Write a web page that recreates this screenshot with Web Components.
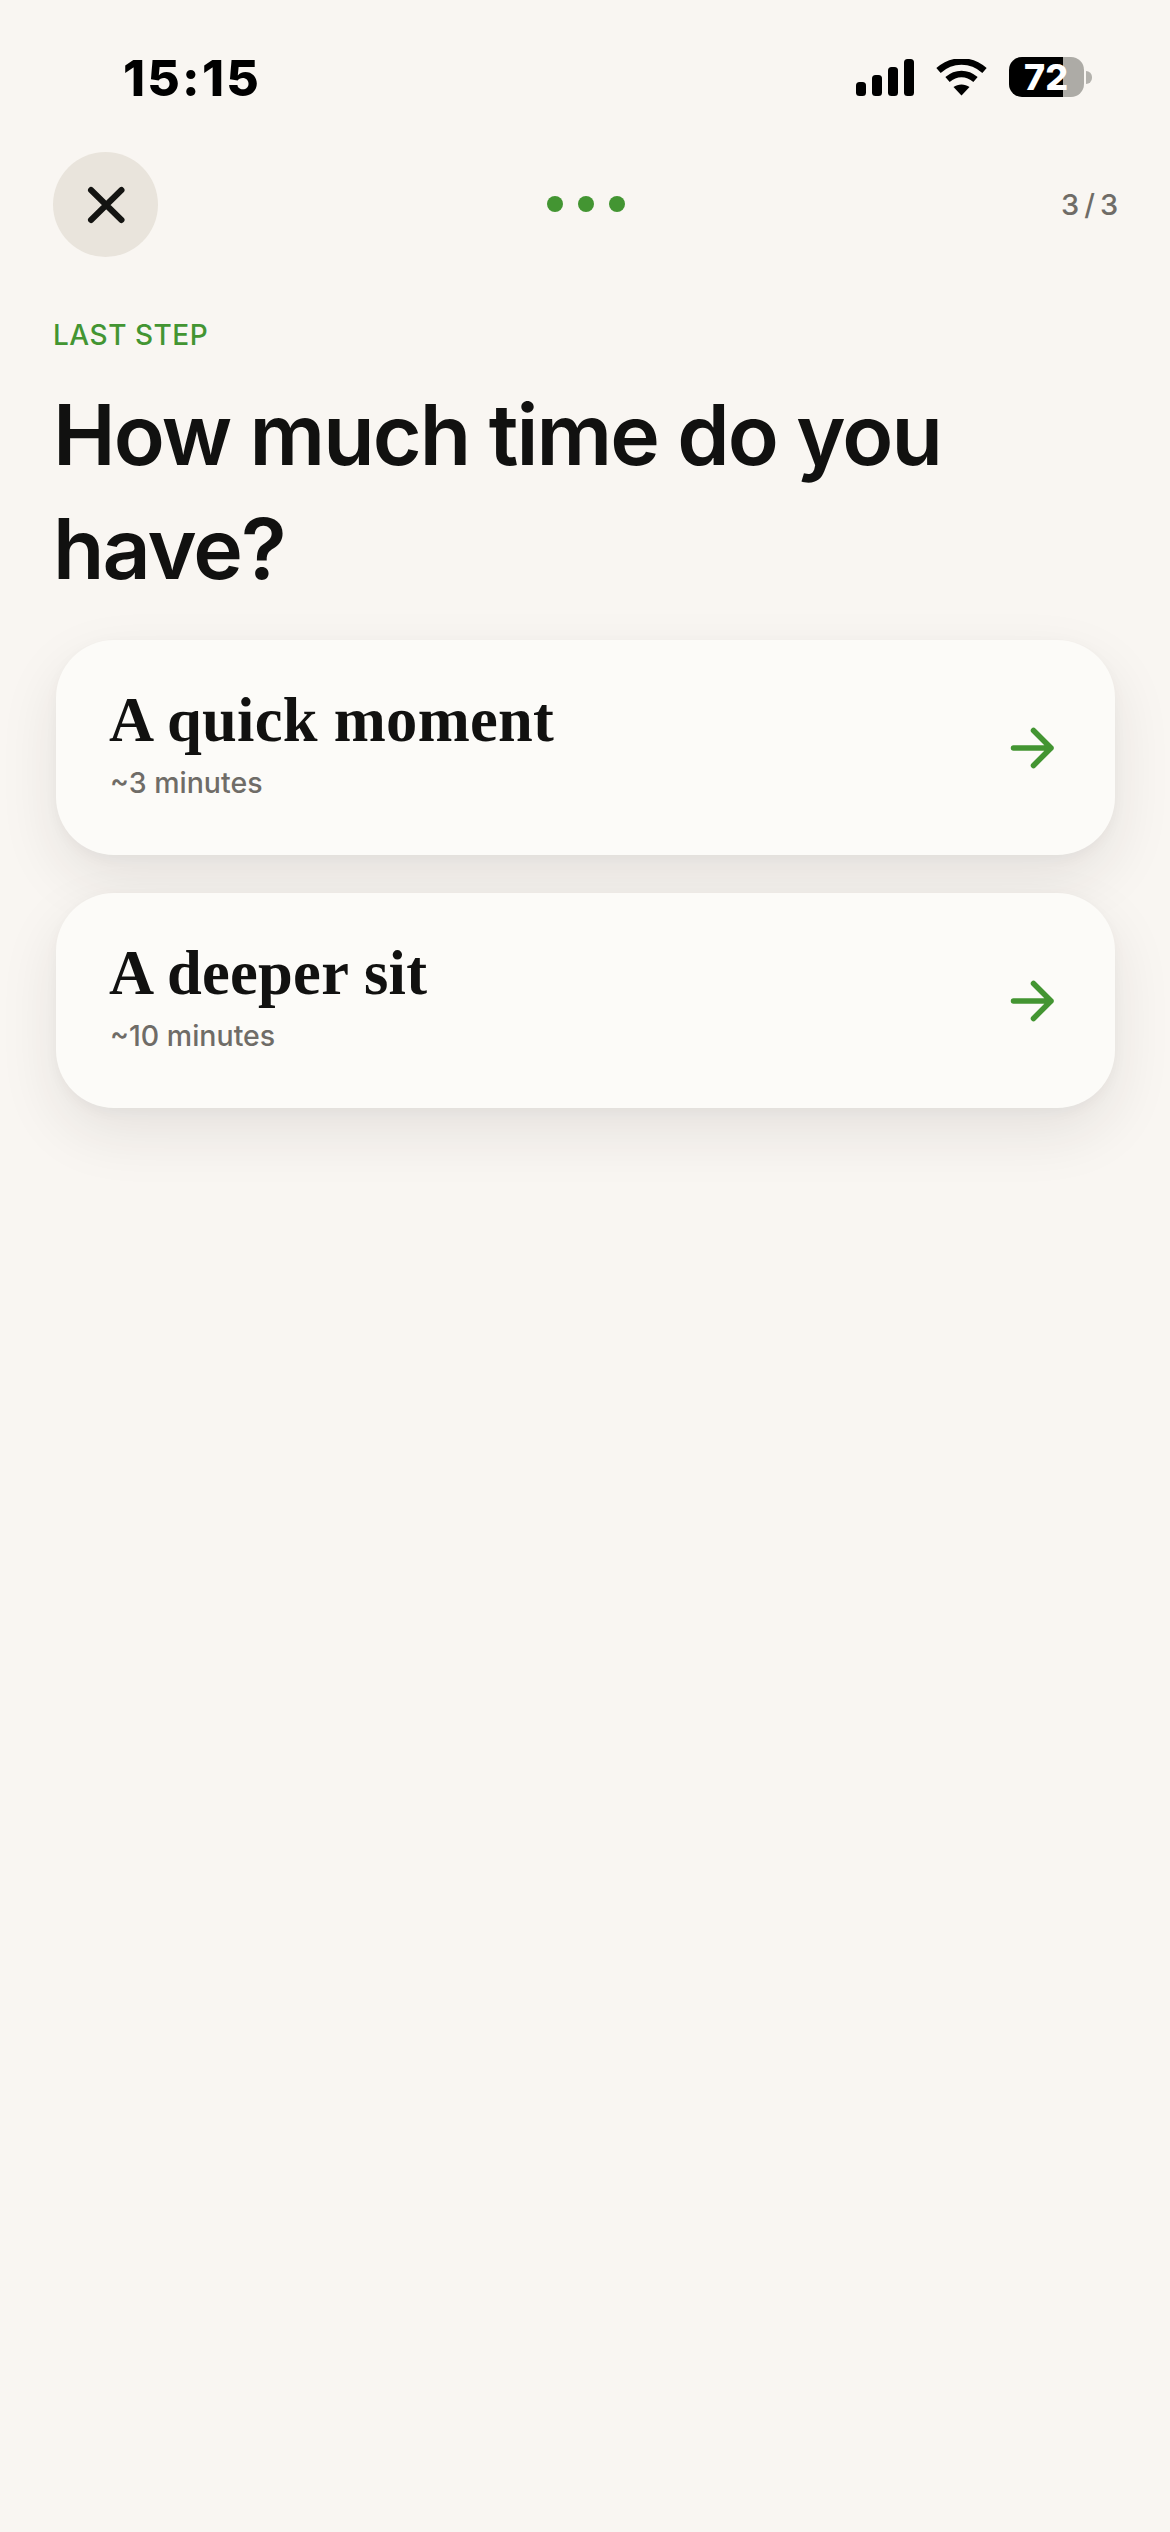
<!doctype html>
<html lang="en"><head><meta charset="utf-8"><title>How much time</title>
<style>
html,body{margin:0;padding:0;background:#f9f6f2}
body{font-family:Inter,"Liberation Sans",sans-serif;width:1170px;height:2532px;overflow:hidden}
</style></head>
<body>
<app-screen>
  <status-bar></status-bar>
  <top-nav></top-nav>
  <step-title></step-title>
  <div style="display:flex;flex-direction:column;gap:38px;margin:0 55px 0 56px">
    <time-card title="A quick moment" sub="~3 minutes"></time-card>
    <time-card title="A deeper sit" sub="~10 minutes"></time-card>
  </div>
</app-screen>
<script>
function def(name, html){
  customElements.define(name, class extends HTMLElement{
    connectedCallback(){
      if(this.shadowRoot) return;
      const r=this.attachShadow({mode:'open'});
      r.innerHTML=typeof html==='function'?html(this):html;
    }
  });
}
def('app-screen',`<style>:host{display:block;width:1170px;height:2532px;background:#f9f6f2}</style><slot></slot>`);
def('status-bar',`<style>
:host{display:flex;align-items:flex-start;justify-content:space-between;height:152px;box-sizing:border-box;padding:57px 78px 0 123px}
.t{font:800 50px/40px Inter,sans-serif;color:#000;letter-spacing:2.200px;margin-top:1px}
.r{display:flex;align-items:flex-start}
svg{display:block}
.wifi{margin:2px 22px 0 22px}
.sig{margin-top:2px}
.bat{width:75px;height:40px;border-radius:13px;background:linear-gradient(90deg,#000 54px,#adaba6 54px);color:#fff;font:800 36px/41px Inter,sans-serif;padding-left:15px;box-sizing:border-box;letter-spacing:0;white-space:nowrap}
.nub{width:6px;height:13px;margin:14px 0 0 2px;border-radius:0 7px 7px 0;background:#b4b2ad}
</style>
<div class="t">15:15</div>
<div class="r">
<svg class="sig" width="58" height="38" viewBox="0 0 58 38"><g fill="#000"><rect x="0" y="23" width="10" height="14" rx="3.5"/><rect x="16" y="16" width="10" height="21" rx="3.5"/><rect x="32" y="8" width="10" height="29" rx="3.5"/><rect x="48" y="0" width="10" height="37" rx="3.5"/></g></svg>
<svg class="wifi" width="51" height="37" viewBox="0 0 51 37"><g fill="none" stroke="#000" stroke-width="6.500"><path d="M2.500 11.500C16 -.5 35 -.5 48.500 11.500"/><path d="M11.500 20.500C20 13 31 13 39.500 20.500"/></g><path d="M17.500 28C22 24.500 29 24.500 33.500 28L25.500 36.500Z" fill="#000"/></svg>
<div class="bat">72</div><div class="nub"></div>
</div>`);
def('top-nav',`<style>
:host{display:grid;grid-template-columns:1fr auto 1fr;align-items:center;padding:0 53px;height:105px}
.x{width:105px;height:105px;border-radius:50%;background:#e9e4dc;display:flex;align-items:center;justify-content:center}
.d{display:flex;gap:15px;align-items:center;margin-left:1px;margin-top:-1px}
.d i{display:block;width:16px;height:16px;border-radius:50%;background:#439532}
.c{justify-self:end;font:500 29px/36px Inter,sans-serif;color:#6f6c67;white-space:pre;letter-spacing:-1.300px}
svg{display:block}
</style>
<div><div class="x"><svg width="40" height="40" viewBox="0 0 40 40"><path d="M5 5L35.500 35M35.500 5L5 35" stroke="#141412" stroke-width="6" stroke-linecap="round" fill="none"/></svg></div></div>
<div class="d"><i></i><i></i><i></i></div>
<div class="c">3 / 3</div>`);
def('step-title',`<style>
:host{display:block;padding:0 53px}
.l{font:550 28px/36px Inter,sans-serif;color:#439532;margin-top:60px;letter-spacing:.5px}
h1{margin:0;padding-top:25px;font:570 84px/114px Inter,sans-serif;letter-spacing:-1.900px;color:#111110}
.sp{height:34px}
</style>
<div class="l">LAST STEP</div><h1>How much time do you<br>have?</h1><div class="sp"></div>`);
def('time-card',(h)=>`<style>
:host{display:flex;align-items:center;justify-content:space-between;height:215px;box-sizing:border-box;background:#fcfbf8;border-radius:58px;padding:0 61px 0 53px;box-shadow:0 24px 60px rgba(40,35,30,.095),0 4px 14px rgba(40,35,30,.035)}
.a{font:700 62.500px/70px "Liberation Serif",serif;color:#111110;letter-spacing:.3px;margin-top:-11px}
.b{font:500 28.500px/34px Inter,sans-serif;color:#6f6c67;margin-top:11px;margin-left:1px}
svg{display:block;flex:none}
</style>
<div><div class="a">${h.getAttribute('title')}</div><div class="b">${h.getAttribute('sub')}</div></div>
<svg width="44" height="42" viewBox="0 0 44 42"><path d="M3.500 21H41M23.500 3.500L41 21L23.500 38.500" fill="none" stroke="#439532" stroke-width="5.500" stroke-linecap="round" stroke-linejoin="round"/></svg>`);
</script>
</body></html>
